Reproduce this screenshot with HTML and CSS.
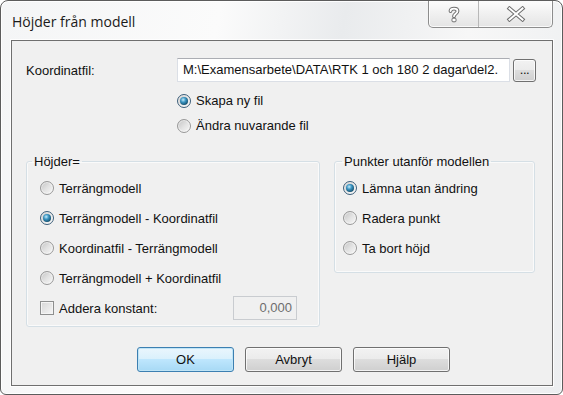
FILE: index.html
```html
<!DOCTYPE html>
<html lang="sv">
<head>
    <meta charset="UTF-8">
    <title>Höjder från modell</title>
    <link rel="stylesheet" href="styles.css">
</head>
<body>

    <div class="window">
        <div class="titlebar">
            <span class="caption">Höjder från modell</span>
            <div class="caption-buttons">
                <div class="cap-btn help">
                    <svg width="16" height="18" viewBox="0 0 16 18">
                        <path d="M4.5 6 C4.5 2.8 11.5 2.8 11.5 6 C11.5 8.8 8 8.6 8 11.3" fill="none" stroke="#6e6e6e" stroke-width="3.8" stroke-linecap="round"/>
                        <path d="M4.5 6 C4.5 2.8 11.5 2.8 11.5 6 C11.5 8.8 8 8.6 8 11.3" fill="none" stroke="#fff" stroke-width="1.8" stroke-linecap="round"/>
                        <rect x="6" y="13.2" width="4" height="3.6" rx="1" fill="#fff" stroke="#6e6e6e" stroke-width="1"/>
                    </svg>
                </div>
                <div class="cap-btn close">
                    <svg width="20" height="16" viewBox="0 0 20 16">
                        <path d="M3.5 2.5 L16.5 13.5 M16.5 2.5 L3.5 13.5" stroke="#6e6e6e" stroke-width="4" stroke-linecap="square"/>
                        <path d="M3.5 2.5 L16.5 13.5 M16.5 2.5 L3.5 13.5" stroke="#fff" stroke-width="2" stroke-linecap="square"/>
                    </svg>
                </div>
            </div>
        </div>

        <div class="client">
            <div class="file-row">
                <label class="file-label">Koordinatfil:</label>
                <div class="textbox">M:\Examensarbete\DATA\RTK 1 och 180 2 dagar\del2.</div>
                <button class="btn browse">...</button>
            </div>

            <div class="file-options">
                <div class="option"><span class="radio checked"></span>Skapa ny fil</div>
                <div class="option"><span class="radio"></span>Ändra nuvarande fil</div>
            </div>

            <div class="groups">
                <fieldset class="group heights">
                    <legend>Höjder=</legend>
                    <div class="option"><span class="radio"></span>Terrängmodell</div>
                    <div class="option"><span class="radio checked"></span>Terrängmodell - Koordinatfil</div>
                    <div class="option"><span class="radio"></span>Koordinatfil - Terrängmodell</div>
                    <div class="option"><span class="radio"></span>Terrängmodell + Koordinatfil</div>
                    <div class="option">
                        <span class="checkbox"></span>Addera konstant:
                        <div class="numbox">0,000</div>
                    </div>
                </fieldset>

                <fieldset class="group outside">
                    <legend>Punkter utanför modellen</legend>
                    <div class="option"><span class="radio checked"></span>Lämna utan ändring</div>
                    <div class="option"><span class="radio"></span>Radera punkt</div>
                    <div class="option"><span class="radio"></span>Ta bort höjd</div>
                </fieldset>
            </div>

            <div class="actions">
                <button class="btn default">OK</button>
                <button class="btn">Avbryt</button>
                <button class="btn">Hjälp</button>
            </div>
        </div>
    </div>

</body>
</html>
```

FILE: styles.css
```css
body {
    margin: 0;
    background: #fff;
    font-family: 'Liberation Sans', Arial, sans-serif;
    font-size: 13px;
    color: #111;
}

.window {
    width: 563px;
    height: 395px;
    box-sizing: border-box;
    border: 1px solid #5c5c5c;
    border-radius: 8px 8px 6px 6px;
    background: linear-gradient(100deg, #f4f5f6 0%, #fbfbfb 35%, #e9ebed 55%, #f7f7f7 75%, #eceef0 100%);
    box-shadow: inset 0 0 0 1px rgba(255, 255, 255, 0.9);
    overflow: hidden;
}

.titlebar {
    height: 39px;
    display: flex;
    justify-content: space-between;
    align-items: flex-start;
}

.caption {
    font-family: 'Open Sans', 'Noto Sans', sans-serif;
    font-size: 14px;
    margin: 11px 0 0 11px;
    color: #1a1a1a;
}

.caption-buttons {
    display: flex;
    margin: -1px 9px 0 0;
    height: 27px;
    border: 1px solid #8d8d8d;
    border-top: none;
    border-radius: 0 0 5px 5px;
    background: linear-gradient(#fdfdfd, #eeeeee 60%, #e4e4e4);
    box-shadow: inset 0 0 0 1px rgba(255, 255, 255, 0.8);
}

.cap-btn {
    display: flex;
    align-items: center;
    justify-content: center;
}

.cap-btn.help {
    width: 49px;
    border-right: 1px solid #b8b8b8;
}

.cap-btn.close {
    width: 73px;
}

.client {
    margin: 0 9px 0 10px;
    height: 346px;
    box-sizing: border-box;
    border: 1px solid #6f6f6f;
    background: #f0f0f0;
    box-shadow: 0 0 0 1px rgba(255, 255, 255, 0.85);
}

/* file row */

.file-row {
    display: flex;
    align-items: center;
    padding: 17px 0 0 14px;
}

.file-label {
    width: 151px;
}

.textbox {
    width: 333px;
    height: 24px;
    box-sizing: border-box;
    padding: 0 5px;
    line-height: 22px;
    border: 1px solid #dbdfe6;
    border-top-color: #abadb3;
    background: #fff;
    white-space: nowrap;
    overflow: hidden;
}

.btn {
    font-family: inherit;
    font-size: 13px;
    color: #111;
    border: 1px solid #707070;
    border-radius: 3px;
    background: linear-gradient(#f2f2f2 0%, #ebebeb 49%, #dddddd 50%, #cfcfcf 100%);
    box-shadow: inset 0 0 0 1px rgba(255, 255, 255, 0.75);
    padding: 0;
}

.btn.browse {
    width: 23px;
    height: 23px;
    margin-left: 3px;
    line-height: 16px;
    letter-spacing: -0.5px;
}

/* options */

.file-options {
    margin: 6px 0 0 165px;
}

.option {
    display: flex;
    align-items: center;
    height: 25px;
}

.radio {
    width: 14px;
    height: 14px;
    box-sizing: border-box;
    border-radius: 50%;
    border: 1px solid #989898;
    background: linear-gradient(135deg, #c4c4c4 0%, #e2e2e2 50%, #f8f8f8 100%);
    box-shadow: inset 0 0 0 1px rgba(255, 255, 255, 0.5);
    margin-right: 5px;
    display: flex;
    align-items: center;
    justify-content: center;
    flex: none;
}

.radio.checked {
    border-color: #3d5f7a;
}

.radio.checked::after {
    content: '';
    width: 8px;
    height: 8px;
    border-radius: 50%;
    background: radial-gradient(circle at 40% 35%, #c4ecfc 0%, #3b95c2 35%, #14506f 75%, #0b3147 100%);
}

.checkbox {
    width: 14px;
    height: 14px;
    box-sizing: border-box;
    border: 1px solid #8e8f8f;
    background: linear-gradient(135deg, #d6d6d6, #f6f6f6);
    box-shadow: inset 0 0 0 1px #f4f4f4;
    margin-right: 5px;
    flex: none;
}

/* groups */

.groups {
    display: flex;
    align-items: flex-start;
    gap: 14px;
    margin: 16px 0 0 14px;
}

.group {
    margin: 0;
    border: 1px solid #d5dfe5;
    border-radius: 3px;
    box-shadow: inset 0 0 0 1px #fafafa;
    min-width: 0;
}

.group legend {
    padding: 0 2px;
    margin-left: -8px;
    line-height: 15px;
}

.group .option {
    height: 30px;
}

.group.heights {
    width: 294px;
    box-sizing: border-box;
    padding: 4px 0 3px 13px;
}

.group.outside {
    width: 201px;
    box-sizing: border-box;
    padding: 4px 0 9px 8px;
}

.group.outside legend {
    margin-left: -1px;
}

.numbox {
    margin-left: auto;
    margin-right: 22px;
    width: 64px;
    height: 24px;
    box-sizing: border-box;
    border: 1px solid #c9ccd0;
    background: #f0f0f0;
    color: #6d6d6d;
    text-align: right;
    line-height: 22px;
    padding-right: 4px;
}

/* bottom buttons */

.actions {
    display: flex;
    gap: 11px;
    margin: 20px 0 0 125px;
}

.actions .btn {
    width: 97px;
    height: 25px;
}

.btn.default {
    border-color: #3c7fb1;
    background: linear-gradient(#eaf6fd 0%, #d9f0fc 49%, #bee6fd 50%, #a7d9f5 100%);
    box-shadow: inset 0 0 0 1px #bfe4f6;
}
```
